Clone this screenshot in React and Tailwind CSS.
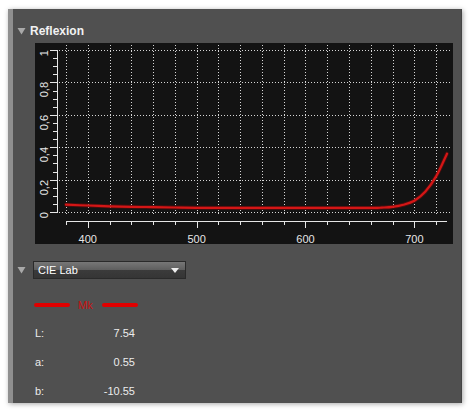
import React from 'react';

// reflectance samples (nm, 0..1)
const SAMPLES = [
  [380, 0.045], [400, 0.04], [420, 0.035], [440, 0.032], [460, 0.03],
  [480, 0.028], [500, 0.026], [540, 0.025], [600, 0.025], [660, 0.025],
  [670, 0.027], [680, 0.032], [690, 0.045], [700, 0.07], [710, 0.125],
  [720, 0.22], [730, 0.36],
];

const px = (nm) => 66 + (nm - 380) * 1.0886;
const py = (v) => 212 - v * 162;

const smoothPath = (pts) => {
  let d = `M${pts[0][0].toFixed(1)},${pts[0][1].toFixed(1)}`;
  for (let i = 0; i < pts.length - 1; i++) {
    const p0 = pts[i - 1] || pts[i];
    const p1 = pts[i];
    const p2 = pts[i + 1];
    const p3 = pts[i + 2] || p2;
    const c1x = p1[0] + (p2[0] - p0[0]) / 6;
    const c1y = p1[1] + (p2[1] - p0[1]) / 6;
    const c2x = p2[0] - (p3[0] - p1[0]) / 6;
    const c2y = p2[1] - (p3[1] - p1[1]) / 6;
    d += ` C${c1x.toFixed(1)},${c1y.toFixed(1)} ${c2x.toFixed(1)},${c2y.toFixed(1)} ${p2[0].toFixed(1)},${p2[1].toFixed(1)}`;
  }
  return d;
};

const Caret = () => (
  <svg width="9" height="8" viewBox="0 0 9 8" className="shrink-0">
    <path d="M0.5 1 L8.5 1 L4.5 7.5 Z" fill="#a9a9a9" />
  </svg>
);

const Chart = () => {
  const grid = [];
  for (let nm = 380; nm <= 730; nm += 20) grid.push(nm);
  const yMinor = [];
  for (let i = 0; i <= 20; i++) yMinor.push(i * 0.05);
  const yLabels = [['1', 1], ['0,8', 0.8], ['0,6', 0.6], ['0,4', 0.4], ['0,2', 0.2], ['0', 0]];
  const curve = smoothPath(SAMPLES.map(([nm, v]) => [px(nm), py(v)]));

  return (
    <svg width="418" height="201" viewBox="35 43 418 201" className="block bg-[#131313]">
      {/* grid */}
      {grid.map((nm) => {
        const x = Math.round(px(nm)) + 0.5;
        return <line key={nm} x1={x} y1="45" x2={x} y2="214" stroke="#d6d6d6" strokeDasharray="1 2" />;
      })}
      {[0, 0.2, 0.4, 0.6, 0.8, 1].map((v) => {
        const y = Math.round(py(v)) + 0.5;
        return <line key={v} x1="59" y1={y} x2="451" y2={y} stroke="#d6d6d6" strokeDasharray="1 2" />;
      })}

      {/* y axis */}
      <line x1="57.5" y1="50" x2="57.5" y2="213" stroke="#e6e6e6" />
      {yMinor.map((v, i) => {
        const y = Math.round(py(v)) + 0.5;
        return <line key={i} x1={i % 4 === 0 ? 50 : 53} y1={y} x2="58" y2={y} stroke="#e6e6e6" />;
      })}
      {yLabels.map(([t, v]) => {
        const y = Math.round(py(v));
        return (
          <text
            key={t}
            x="48"
            y={y}
            transform={`rotate(-90 48 ${y})`}
            textAnchor="end"
            fontSize="11"
            fill="#e6e6e6"
            fontFamily="Liberation Sans, Arial, sans-serif"
          >
            {t}
          </text>
        );
      })}

      {/* x axis */}
      <line x1="66" y1="221.5" x2="447" y2="221.5" stroke="#e6e6e6" />
      {grid.map((nm) => {
        const x = Math.round(px(nm)) + 0.5;
        return <line key={nm} x1={x} y1="221" x2={x} y2={nm % 100 === 0 ? 228 : 225} stroke="#e6e6e6" />;
      })}
      {[400, 500, 600, 700].map((nm) => (
        <text
          key={nm}
          x={px(nm)}
          y="243"
          textAnchor="middle"
          fontSize="11"
          fill="#e6e6e6"
          fontFamily="Liberation Sans, Arial, sans-serif"
        >
          {nm}
        </text>
      ))}

      {/* curve */}
      <path d={curve} fill="none" stroke="#7a0a0a" strokeWidth="4" strokeOpacity="0.5" strokeLinecap="round" />
      <path d={curve} fill="none" stroke="#d41616" strokeWidth="2.2" strokeLinecap="round" />
    </svg>
  );
};

const LabRow = ({ label, value }) => (
  <div className="flex h-[29px] w-[100px] items-center justify-between text-[11px] text-[#ececec]">
    <span>{label}</span>
    <span>{value}</span>
  </div>
);

export default function App() {
  return (
    <div className="h-[413px] w-[470px] bg-white pl-[8px] pt-[9px] font-['Liberation_Sans',Arial,sans-serif]">
      <div className="flex h-[394px] w-[454px] shadow-[1px_1px_5px_rgba(0,0,0,0.35)]">
        <div className="w-[5px] bg-[#8f8f8f]" />
        <div className="flex flex-1 flex-col border-r border-[#444444] bg-[#505050]">
          {/* Reflexion header */}
          <div className="mt-[14px] flex h-[16px] items-center gap-[4px] pl-[4px]">
            <Caret />
            <span className="text-[12px] font-bold text-[#f2f2f2]">Reflexion</span>
          </div>

          <div className="ml-[22px] mt-[4px]">
            <Chart />
          </div>

          <div className="mt-[3px] h-[2px] w-[432px] bg-[#6b6b6b]" />

          {/* CIE Lab section */}
          <div className="mt-[14px] flex items-center gap-[7px] pl-[4px]">
            <Caret />
            <div className="flex h-[18px] w-[153px] items-center justify-between border border-[#2a2a2a] bg-[linear-gradient(to_bottom,#777777_0%,#5e5e5e_50%,#3b3b3b_50%,#353535_100%)] pl-[4px] pr-[6px]">
              <span className="text-[11px] text-white">CIE Lab</span>
              <svg width="8" height="5" viewBox="0 0 8 5">
                <path d="M0 0 L8 0 L4 5 Z" fill="#ededed" />
              </svg>
            </div>
          </div>

          <div className="ml-[21px] mt-[18px] flex h-[16px] items-center">
            <div className="h-[4px] w-[36px] rounded-full bg-[#e00000]" />
            <span className="ml-[8px] text-[11px] text-[#c81010]">Mk</span>
            <div className="ml-[9px] h-[4px] w-[36px] rounded-full bg-[#e00000]" />
          </div>

          <div className="ml-[22px] mt-[6px] flex flex-col">
            <LabRow label="L:" value="7.54" />
            <LabRow label="a:" value="0.55" />
            <LabRow label="b:" value="-10.55" />
          </div>
        </div>
      </div>
    </div>
  );
}
